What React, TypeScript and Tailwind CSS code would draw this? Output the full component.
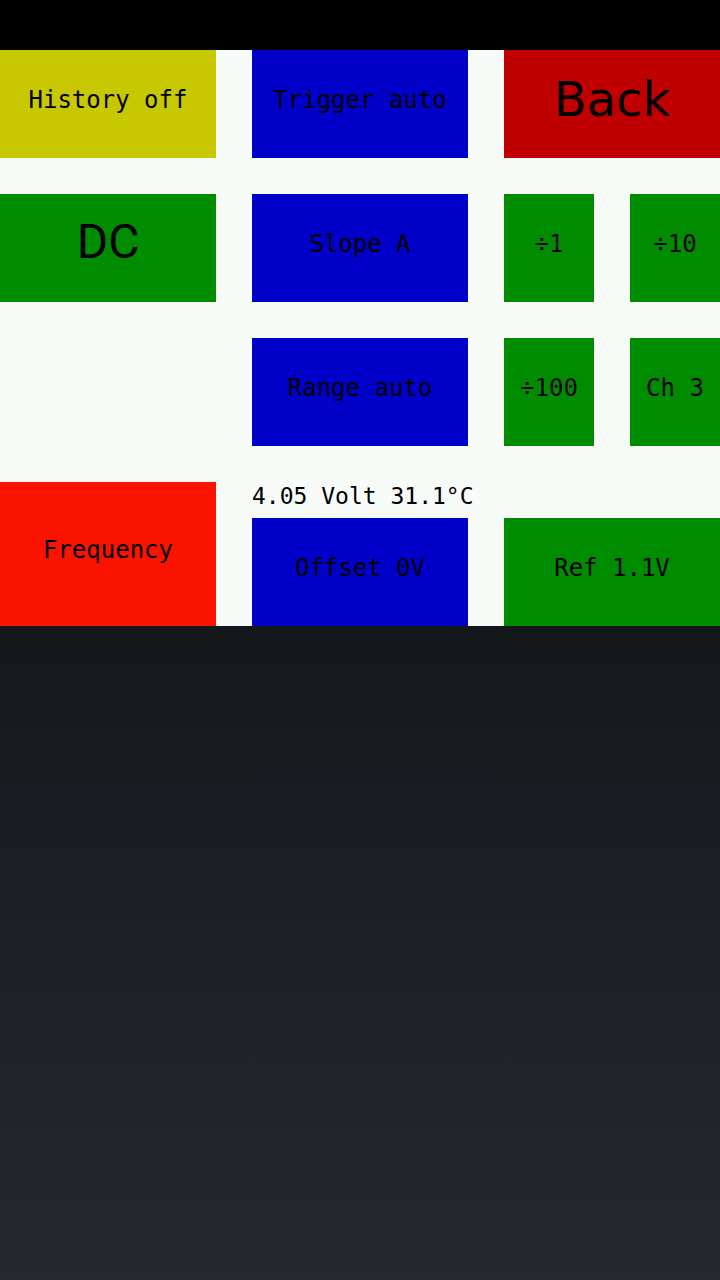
const MONO = "pb-2 font-['DejaVu_Sans_Mono',monospace] text-[24px] text-black";

function Tile({ label, color, font = MONO, className = '' }: { label: string; color: string; font?: string; className?: string }) {
  return (
    <div className={['flex items-center justify-center whitespace-nowrap', color, font, className].join(' ')}>
      {label}
    </div>
  );
}

export default function App() {
  return (
    <div className="flex min-h-[1280px] flex-col bg-black">
      <div className="h-[50px] bg-black" />
      <div className="grid grid-cols-[216px_216px_90px_90px] grid-rows-[108px_108px_108px_144px] gap-x-9 gap-y-9 bg-[#f6fbf8]">
        <Tile label="History off" color="bg-[#c8c800]" />
        <Tile label="Trigger auto" color="bg-[#0000c8]" />
        <Tile
          label="Back"
          color="bg-[#c00000]"
          font="pb-[10px] font-['DejaVu_Sans',sans-serif] text-[48px] text-black"
          className="col-span-2"
        />

        <Tile label="DC" color="bg-[#008c00]" font="pb-3 font-['Roboto',sans-serif] text-[48px] text-black" />
        <Tile label="Slope A" color="bg-[#0000c8]" />
        <Tile label="÷1" color="bg-[#008c00]" />
        <Tile label="÷10" color="bg-[#008c00]" />

        <div />
        <Tile label="Range auto" color="bg-[#0000c8]" />
        <Tile label="÷100" color="bg-[#008c00]" />
        <Tile label="Ch 3" color="bg-[#008c00]" />

        <Tile label="Frequency" color="bg-[#fa1400]" />
        <div className="flex flex-col">
          <div className="flex h-9 items-center whitespace-nowrap pb-2 font-['DejaVu_Sans_Mono',monospace] text-[23px] text-black">
            4.05 Volt 31.1°C
          </div>
          <Tile label="Offset 0V" color="bg-[#0000c8]" className="h-[108px]" />
        </div>
        <div className="col-span-2 flex flex-col">
          <div className="h-9" />
          <Tile label="Ref 1.1V" color="bg-[#008c00]" className="h-[108px]" />
        </div>
      </div>
      <div className="flex-1 bg-gradient-to-b from-[#15181b] to-[#25282e]" />
    </div>
  );
}
